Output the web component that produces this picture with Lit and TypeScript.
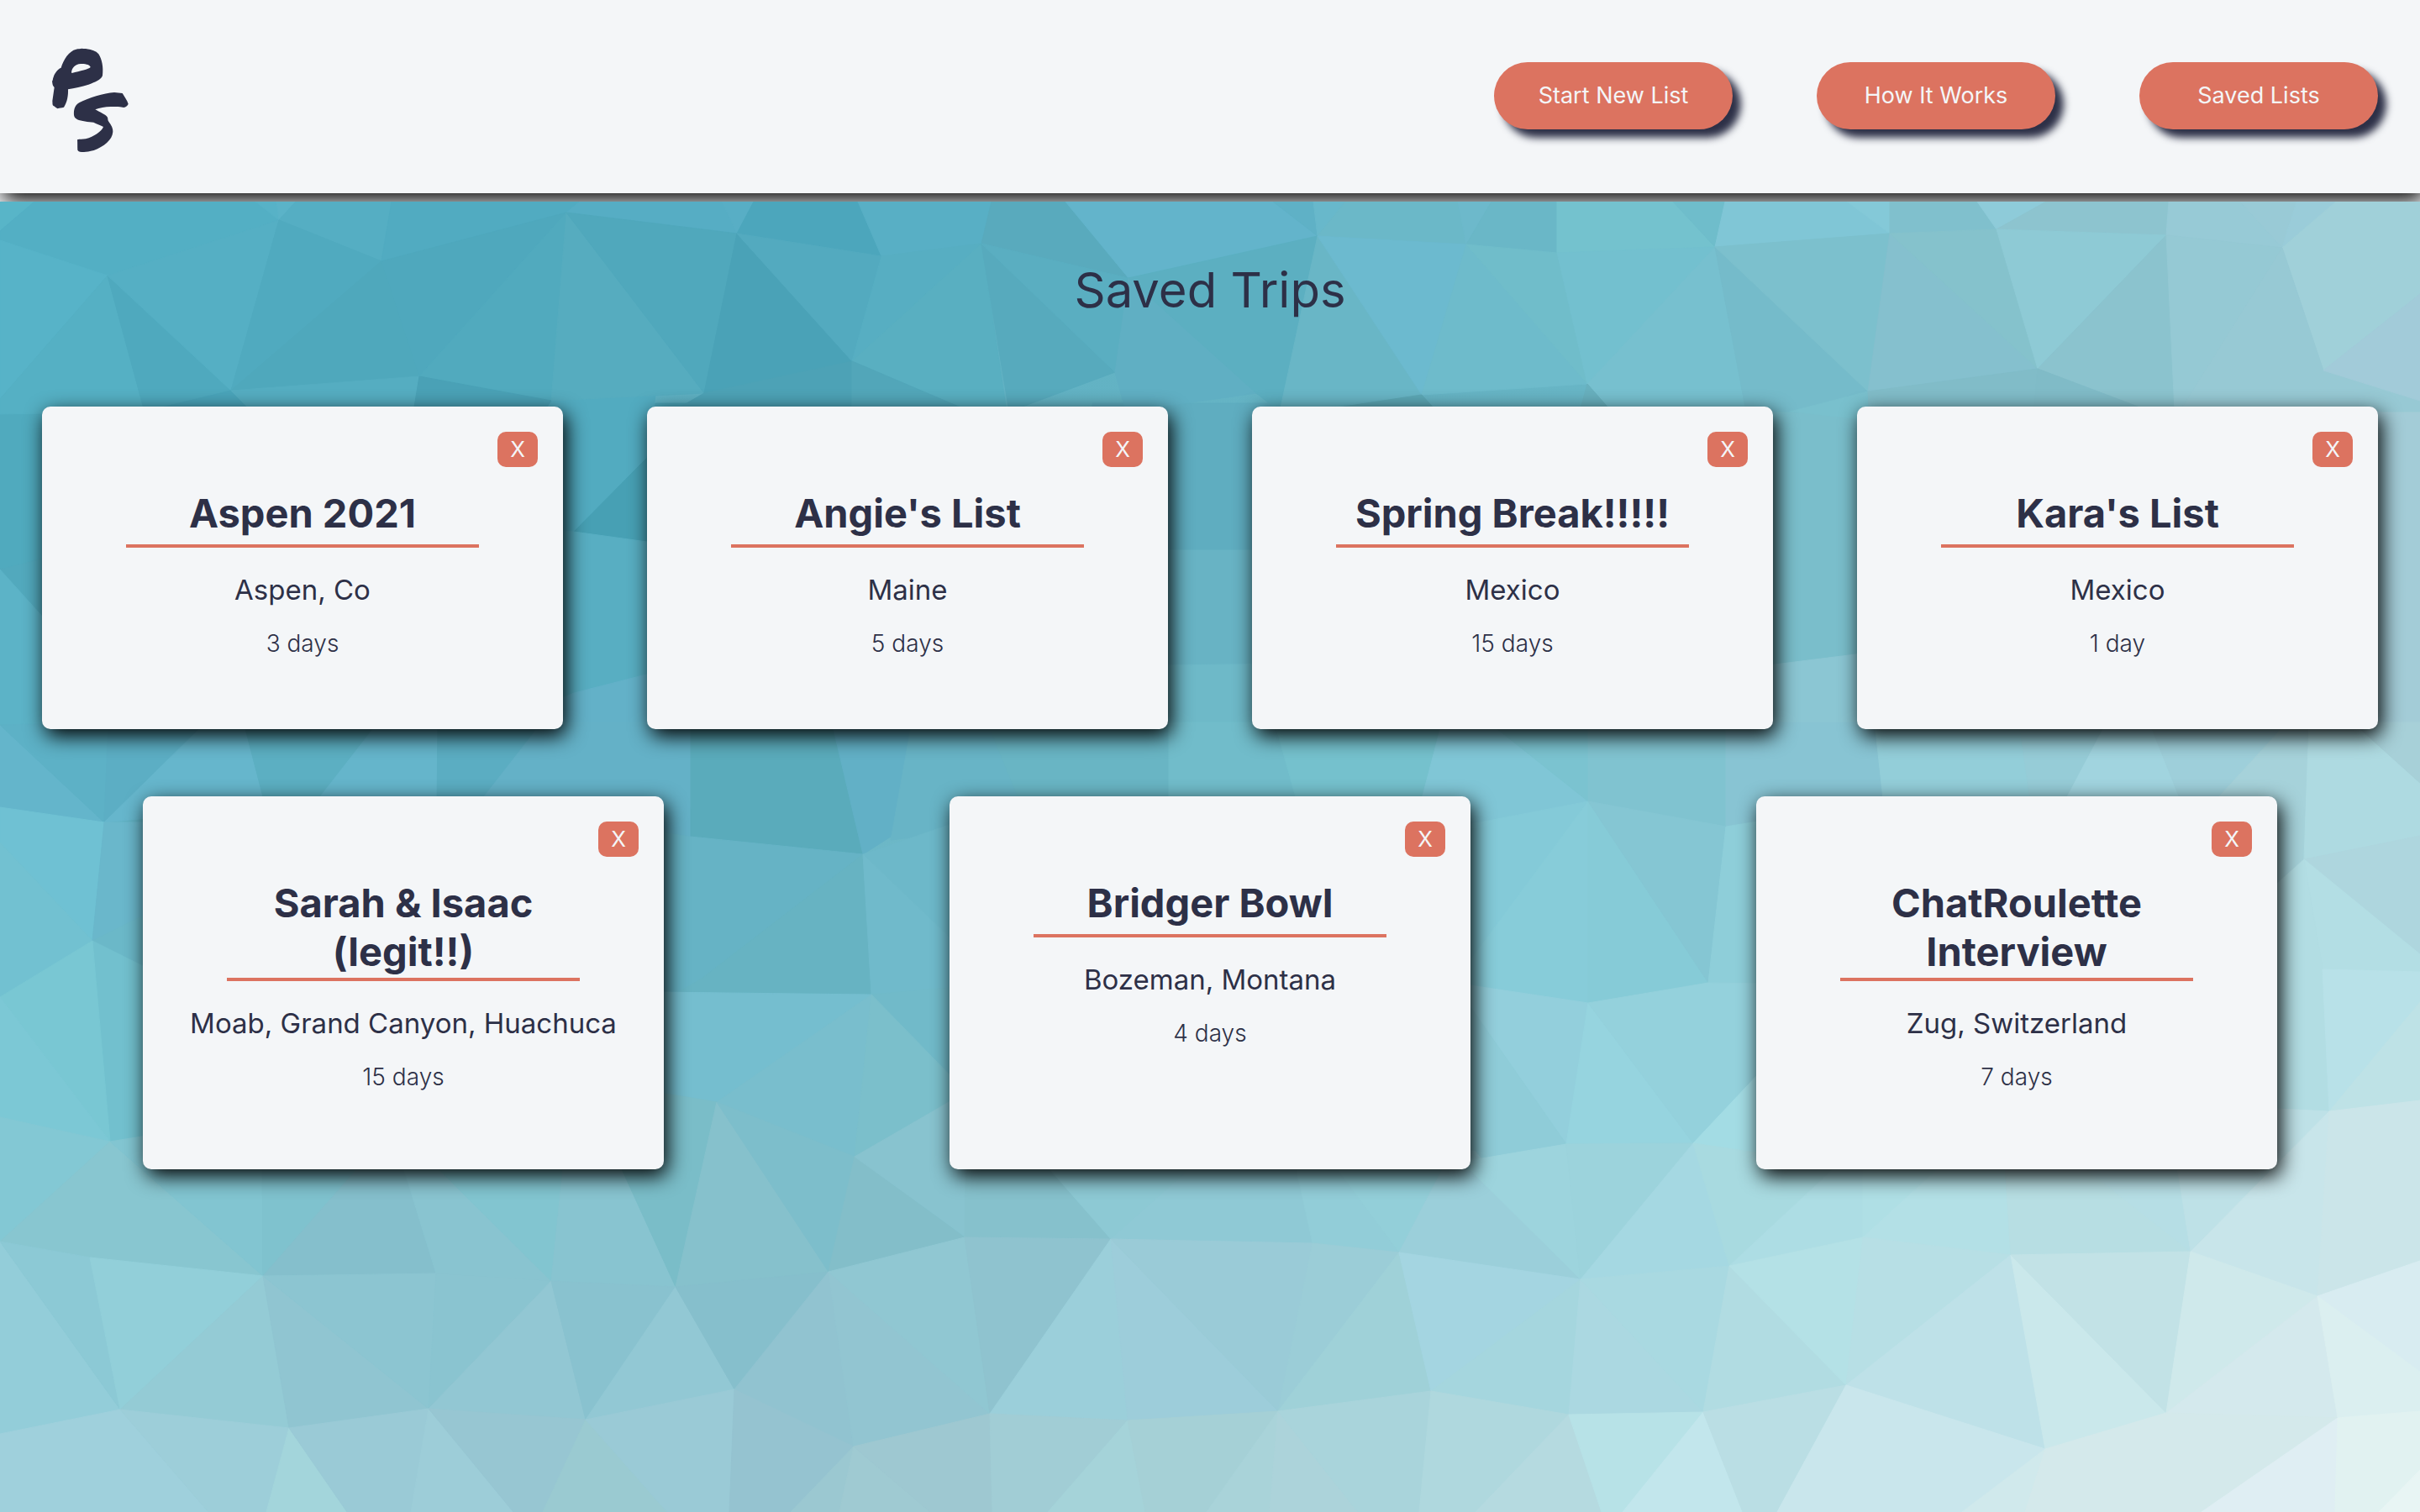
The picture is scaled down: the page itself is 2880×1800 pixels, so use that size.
import { LitElement, html, svg, css } from "lit";
import { customElement, property } from "lit/decorators.js";

interface Trip {
  name: string;
  place: string;
  days: number;
  roomy?: boolean;
}

const TRIPS: Trip[] = [
  { name: "Aspen 2021", place: "Aspen, Co", days: 3 },
  { name: "Angie's List", place: "Maine", days: 5 },
  { name: "Spring Break!!!!!", place: "Mexico", days: 15 },
  { name: "Kara's List", place: "Mexico", days: 1 },
  { name: "Sarah & Isaac (legit!!)", place: "Moab, Grand Canyon, Huachuca", days: 15, roomy: true },
  { name: "Bridger Bowl", place: "Bozeman, Montana", days: 4 },
  { name: "ChatRoulette Interview", place: "Zug, Switzerland", days: 7, roomy: true },
];

const NAV = ["Start New List", "How It Works", "Saved Lists"];

// Facets of the low-poly backdrop: fill colour, then the corner points.
const FACETS = `
50aabe 0,493 300,480 300,600 0,678
52a9bd 0,678 300,600 300,900 200,900
5cb3c7 0,678 200,900 0,900
52abc0 600,480 780,470 770,545 683,633 600,640
4ca4b8 780,480 900,480 900,660 770,645 770,545
47a0b4 770,545 683,633 770,645
58aec2 600,625 683,633 770,645 800,650 800,795 683,825 600,860
63b1c8 600,860 683,825 800,795 830,868 822,996 600,960
5fadc0 1300,480 1540,480 1540,655 1300,655
68b3c4 1300,655 1540,655 1540,790 1300,793
6eb9c8 1300,793 1540,790 1540,870 1300,870
7abecb 2080,480 2240,480 2240,778 2080,795
8bc6d3 2080,795 2240,775 2240,870 2080,870
a3ccd7 2800,470 2880,477 2880,868 2800,868
58b5c8 0,240 41,240 0,275
53afc4 41,240 304,240 332,262 128,328 0,286 0,275
57b2c7 304,240 329,240 332,262
5bb3c8 329,240 352,240 332,262
55aec3 352,240 466,240 454,311 332,262
51abc1 466,240 690,240 674,253 454,311
56adc4 690,240 859,240 877,278 674,253
58aec5 859,240 897,240 877,278
4ca6bc 897,240 1021,240 1049,305 877,278
58afc5 1021,240 1180,240 1168,290 1049,305
59aabd 1180,240 1268,240 1343,331 1168,290
63b4cb 1268,240 1515,240 1568,281 1343,331
5fb1c6 1515,240 1563,240 1568,281
68b8cb 1563,240 1601,240 1568,281
6bb8c8 1601,240 1735,240 1745,291 1568,281
6db9cb 1735,240 1775,240 1745,291
6ab7c7 1775,240 1853,240 1853,301 1745,291
74c2ce 1853,240 1991,240 2041,294 1853,301
6fbdcb 1991,240 2053,240 2041,294
80c6d6 2053,240 2198,240 2249,278 2041,294
84c9d8 2198,240 2249,240 2249,278
80c0cd 2249,240 2353,240 2376,273 2249,278
8ecbd9 2353,240 2435,240 2376,273
8dc4cf 2435,240 2581,240 2578,280 2376,273
97cad6 2581,240 2666,240 2716,295 2578,280
99cad6 2666,240 2733,240 2716,295
9accd9 2733,240 2780,240 2716,295
a0d0d9 2780,240 2880,240 2880,350 2765,441 2716,295
57b3c8 0,286 128,328 0,475
55b0c4 128,328 0,475 0,493 172,490
4fa9be 128,328 172,490 275,465
55afc4 128,328 332,262 275,465
50aabf 332,262 454,311 275,465
4fa8bc 454,311 275,465 499,448
4fa8bd 454,311 674,253 499,448
51aabe 674,253 499,448 656,477
56acbf 674,253 656,477 838,468
50a8bc 674,253 877,278 838,468
4aa2b7 877,278 838,468 1014,430
53aabf 877,278 1049,305 1014,430
57aec2 1049,305 1168,290 1014,430
59afc1 1168,290 1014,430 1201,510
57aabd 1168,290 1201,490 1327,443
5aaec1 1168,290 1343,331 1327,443
60afc3 1343,331 1327,443 1340,490 1495,468
5cafc1 1343,331 1568,281 1523,490 1495,468
69b6c6 1568,281 1523,490 1692,470
6cbacf 1568,281 1745,291 1692,470
6ebbcb 1745,291 1692,470 1889,457
70bdca 1745,291 1853,301 1889,457
73c0cf 1853,301 2041,294 1889,457
77c0cf 2041,294 1889,457 1918,490 2078,490
75bbca 2041,294 2078,490 2150,490 2223,466
7cc0cd 2041,294 2249,278 2223,466
85c0ce 2249,278 2223,466 2425,439
85c2cc 2249,278 2376,273 2425,439
8ecad5 2376,273 2578,280 2425,439
8bc3ce 2578,280 2425,439 2560,490 2588,490
95c9d4 2578,280 2716,295 2594,490 2588,490
97c9d4 2716,295 2765,441 2880,477 2880,490 2594,490
a2cbd9 2765,441 2880,350 2880,477
4aa4ba 172,490 275,465 300,490
55adc1 275,465 499,448 492,490 300,490
4aa1b6 499,448 656,477 640,500 492,490
4da2b6 838,468 1014,430 1014,490 800,490
52a6b9 1014,430 1014,490 1155,490
5da8b6 1560,490 1692,470 1710,490
68b0be 1889,457 1880,490 1918,490
79c0cd 2130,490 2223,466 2225,500
81bcc8 2223,466 2425,439 2420,500 2225,500
80bbc7 2425,439 2420,500 2560,490
64b5cb 0,863 124,979 0,961
5db1c6 0,863 129,860 124,979
5caec4 129,860 245,860 124,979
66b6cc 245,860 290,860 316,960 124,979
5cafc2 290,860 450,860 372,960 316,960
65b5cb 450,860 521,860 520,960 372,960
5badc2 521,860 645,860 567,960 520,960
64b1c7 645,860 822,860 822,996 567,960
6fc1d3 0,961 124,979 110,1120 0,1003
72c1d1 0,1003 110,1120 0,1187
6ab7cb 124,979 200,979 200,1075 110,1120
6bb8c8 110,1120 200,1075 200,1165
72c0ce 110,1120 200,1165 200,1350 131,1359
79c7d3 0,1187 110,1120 131,1359
7cc8d5 0,1187 131,1359 0,1330
5aabbb 822,860 990,860 1027,1017 822,996
62b0c6 990,860 1085,860 1085,980 1027,1017
68b4c6 1085,860 1175,860 1220,970 1125,992 1060,1000
69b5c4 1175,860 1391,860 1391,970 1220,970
71bcca 1391,860 1517,860 1545,960 1391,960
75c1cd 1517,860 1716,860 1687,970 1545,960
80c6d6 1716,860 1772,860 1890,954 1740,983 1687,970
7bc3d0 1772,860 1890,860 1890,954
80c3d0 1890,860 2054,860 2054,984 1890,954
88c4d3 2054,860 2231,860 2242,960 2100,976 2054,984
66b3c5 780,990 822,996 1027,1017 835,1165 808,1181 780,1180
67b3c2 1027,1017 835,1165 808,1181 1037,1184
6db8c9 1027,1017 1150,975 1150,1135
70bacb 1027,1017 1150,1135 1150,1174 1037,1184
75becf 780,1181 1037,1184 853,1312 780,1303
71bac9 1037,1184 1150,1174 1150,1300
79becd 1037,1184 853,1312 1017,1377
7bbfcb 1037,1184 1150,1300 1017,1377
84cad8 1730,985 1890,954 1730,1170
87ccd9 1890,954 1730,1170 1890,1194
86cbd7 1890,954 1890,1194 2033,1170
85c6d3 1890,954 2054,984 2033,1170
8eced9 2054,984 2110,975 2110,1171 2033,1170
93cfdc 1730,1170 1890,1194 1864,1362
8fccd8 1730,1170 1864,1362 1730,1385
96d4df 1890,1194 1864,1362 2015,1361
94d1dc 1890,1194 2033,1170 2110,1171 2110,1260 2015,1361
a3dce4 2015,1361 2110,1260 2110,1375
93ced9 2231,860 2403,860 2417,960 2242,960
96ccd7 2403,860 2507,860 2454,960 2417,960
a1d4df 2507,860 2558,860 2598,960 2454,960
9ecfda 2558,860 2722,860 2630,960 2598,960
a6d2da 2722,860 2748,860 2742,1023 2690,1075 2630,960
aedae1 2748,860 2800,860 2880,932 2880,995 2742,1023
a7d0d8 2800,860 2880,860 2880,932
aed6de 2742,1023 2880,995 2880,1136
b3dee4 2742,1023 2880,1136 2880,1157 2764,1154
b2dde3 2742,1023 2764,1154 2772,1323 2690,1319 2690,1070
b8e1e8 2764,1154 2880,1157 2880,1193 2772,1323
bee2e6 2772,1323 2880,1193 2880,1310
83c8d4 0,1330 131,1359 0,1478
88c6d0 131,1359 0,1478 107,1497 313,1519
82c5d1 131,1359 312,1330 313,1519
7fc2ce 312,1330 470,1340 313,1519
85bfcc 470,1340 474,1370 519,1516 313,1519
89c4d0 474,1370 500,1370 656,1525 519,1516
82c5d0 500,1370 672,1370 656,1525
88c4d0 672,1370 730,1370 804,1532 656,1525
7abdc8 730,1370 780,1300 853,1312 804,1532
86c1cc 853,1312 804,1532 986,1514
7dbecb 853,1312 1017,1377 986,1514
83bec9 1017,1377 986,1514 1148,1473
88c3cf 1017,1377 1150,1300 1150,1473
86c1cc 1150,1370 1230,1370 1322,1475 1148,1473
8dc9d4 1230,1370 1440,1370 1322,1475
8fc9d5 1440,1370 1538,1370 1562,1480 1322,1475
92cdd8 1538,1370 1575,1370 1665,1491 1562,1480
93cfd9 1575,1370 1728,1370 1665,1491
9bcfda 1728,1370 1755,1370 1881,1523 1665,1491
9dd4dd 1740,1383 1864,1362 1881,1523
9cd3dc 1864,1362 2015,1361 1881,1523
a5d8e2 2015,1361 1881,1523 2058,1507
a8dae0 2015,1361 2110,1375 2205,1370 2058,1507
addde4 2205,1370 2217,1370 2217,1473 2058,1507
afdfe5 2217,1370 2330,1370 2217,1473
b3e0e6 2330,1370 2385,1370 2393,1494 2217,1473
b7dee3 2385,1370 2455,1370 2607,1490 2393,1494
b6dee5 2455,1370 2588,1370 2607,1490
bee1e7 2588,1370 2690,1319 2772,1323 2607,1490
c8e5ea 2772,1323 2607,1490 2758,1543
cbe5e9 2772,1323 2880,1310 2880,1501 2758,1543
93cdd9 0,1478 0,1707 143,1678
8cc9d5 0,1478 107,1497 143,1678
92cfd9 107,1497 313,1519 143,1678
94cbd5 313,1519 143,1678 344,1700
90c5d1 313,1519 344,1700 510,1677
8cc5d1 313,1519 519,1516 510,1677
8ac4d0 519,1516 656,1525 510,1677
92c7d3 656,1525 510,1677 697,1690
89c2cf 656,1525 804,1532 697,1690
92c8d4 804,1532 697,1690 874,1654
86bfcc 804,1532 986,1514 874,1654
91c3d0 986,1514 874,1654 1016,1722
92c5d1 986,1514 1016,1722 1178,1683
90c7d2 986,1514 1148,1473 1178,1683
8fc3cf 1148,1473 1322,1475 1178,1683
9bcfda 1322,1475 1178,1683 1342,1691
9dcdda 1322,1475 1342,1691 1521,1680
9acbd7 1322,1475 1562,1480 1521,1680
9bcdd7 1562,1480 1665,1491 1521,1680
9fd1d8 1665,1491 1521,1680 1703,1656
a4d5e1 1665,1491 1881,1523 1703,1656
a5d6de 1881,1523 1703,1656 1867,1684
abd8e1 1881,1523 1867,1684 2027,1681
a9d9e1 1881,1523 2058,1507 2027,1681
b1dce2 2058,1507 2027,1681 2197,1649
b4e1e6 2058,1507 2217,1473 2197,1649
b7dfe5 2217,1473 2393,1494 2197,1649
bee1e8 2393,1494 2197,1649 2434,1725
cae8eb 2393,1494 2434,1725 2578,1682
c2e2e6 2393,1494 2607,1490 2578,1682
cfe9eb 2607,1490 2578,1682 2758,1543
d4e9ed 2758,1543 2578,1682 2782,1688
d8ecf1 2758,1543 2880,1501 2880,1633
dbeff0 2758,1543 2880,1633 2880,1680 2782,1688
9fd0dc 0,1707 143,1678 248,1800 0,1800
9dced9 143,1678 344,1700 317,1800 248,1800
a3d5db 344,1700 317,1800 413,1800
9acad6 344,1700 510,1677 489,1800 413,1800
9dcdd8 510,1677 489,1800 611,1800
97c6d2 510,1677 697,1690 646,1800 611,1800
9acad1 697,1690 646,1800 794,1800
9acad6 697,1690 874,1654 868,1800 794,1800
95c3d0 874,1654 1016,1722 941,1800 868,1800
9bc8d1 1016,1722 941,1800 999,1800
9fcad2 1016,1722 999,1800 1107,1800
9ec8d1 1016,1722 1178,1683 1181,1800 1107,1800
a1cdd5 1178,1683 1342,1691 1247,1800 1181,1800
a5d3d9 1342,1691 1247,1800 1363,1800
a5d0d6 1342,1691 1521,1680 1436,1800 1363,1800
a9d3d9 1521,1680 1436,1800 1511,1800
acd3da 1521,1680 1511,1800 1616,1800
a9d4db 1521,1680 1703,1656 1689,1800 1616,1800
afd8de 1703,1656 1867,1684 1756,1800 1689,1800
b5dae0 1867,1684 1756,1800 1906,1800
b7e2e7 1867,1684 2027,1681 1931,1800 1906,1800
c2e6ec 2027,1681 1931,1800 2074,1800
badee4 2027,1681 2197,1649 2115,1800 2074,1800
c9e6ec 2197,1649 2434,1725 2335,1800 2115,1800
d0e9ec 2434,1725 2335,1800 2410,1800
d4e9eb 2434,1725 2578,1682 2782,1688 2620,1800 2410,1800
dfeef3 2782,1688 2620,1800 2779,1800
e1f2f1 2782,1688 2880,1680 2880,1750 2831,1800 2779,1800
e8f5f4 2880,1750 2880,1800 2831,1800
`
  .trim()
  .split("\n")
  .map((line) => {
    const cut = line.indexOf(" ");
    return { fill: "#" + line.slice(0, cut), points: line.slice(cut + 1) };
  });

@customElement("poly-backdrop")
export class PolyBackdrop extends LitElement {
  static styles = css`
    :host {
      display: block;
    }
    .art {
      display: block;
      width: 100%;
      height: 100%;
    }
  `;

  render() {
    return html`
      <svg class="art" viewBox="0 240 2880 1560" preserveAspectRatio="none" aria-hidden="true">
        <defs>
          <linearGradient id="base" x1="0" y1="0" x2="1" y2="1">
            <stop offset="0" stop-color="#53abc0" />
            <stop offset="0.4" stop-color="#68b5c5" />
            <stop offset="0.7" stop-color="#93cdd8" />
            <stop offset="1" stop-color="#e0f0f1" />
          </linearGradient>
        </defs>
        <rect x="0" y="240" width="2880" height="1560" fill="url(#base)" />
        ${FACETS.map(
          (f) => svg`<polygon points=${f.points} fill=${f.fill} stroke=${f.fill} stroke-width="1" />`
        )}
      </svg>
    `;
  }
}

@customElement("trip-card")
export class TripCard extends LitElement {
  @property({ attribute: false }) trip!: Trip;

  static styles = css`
    :host {
      display: flex;
    }
    .card {
      flex: 1;
      box-sizing: border-box;
      display: flex;
      flex-direction: column;
      align-items: center;
      padding: 30px 30px 85px;
      border-radius: 10px;
      background: #f4f6f8;
      box-shadow: 4px 8px 24px #000;
      color: #2d3047;
      text-align: center;
    }
    .roomy {
      padding-bottom: 93px;
    }
    .remove {
      align-self: flex-end;
      width: 48px;
      height: 42px;
      padding: 0;
      border: 0;
      border-radius: 10px;
      background: #dc7360;
      color: #f4f6f8;
      font: 400 26px/42px Inter, "Liberation Sans", sans-serif;
      cursor: pointer;
    }
    .name {
      box-sizing: border-box;
      width: 75%;
      min-height: 70px;
      margin: 26px 0 0;
      padding-bottom: 2px;
      border-bottom: 4px solid #dc7360;
      font-size: 47px;
      line-height: 58px;
      font-weight: 700;
    }
    .place {
      margin: 28px 0 0;
      font-size: 33px;
      line-height: 44px;
    }
    .days {
      margin: 25px 0 0;
      font-size: 28px;
      line-height: 34px;
      font-weight: 300;
    }
  `;

  render() {
    const t = this.trip;
    return html`
      <article class="card ${t.roomy ? "roomy" : ""}">
        <button class="remove" type="button" aria-label="X, remove ${t.name}">X</button>
        <h2 class="name">${t.name}</h2>
        <p class="place">${t.place}</p>
        <p class="days">${t.days} ${t.days === 1 ? "day" : "days"}</p>
      </article>
    `;
  }
}

@customElement("app-root")
export class AppRoot extends LitElement {
  static styles = css`
    :host {
      display: flex;
      flex-direction: column;
      min-height: 100vh;
      background: #f4f6f8;
      color: #2d3047;
      font-family: Inter, "Liberation Sans", sans-serif;
    }
    .header {
      display: flex;
      align-items: center;
      justify-content: space-between;
      padding: 46px 50px 48px;
      margin-bottom: 10px;
      background: #f4f6f8;
      box-shadow: 4px 8px 24px #000;
    }
    .home {
      display: block;
    }
    .logo {
      display: block;
      width: 114px;
      height: 136px;
    }
    .nav {
      display: flex;
      gap: 100px;
    }
    .nav-button {
      width: 284px;
      height: 80px;
      padding: 0;
      border: 0;
      border-radius: 40px;
      background: #dc7360;
      box-shadow: 10px 10px 10px #2d3047;
      color: #f4f6f8;
      font: 400 27px/34px Inter, "Liberation Sans", sans-serif;
      cursor: pointer;
    }
    .main {
      position: relative;
      z-index: 0;
      flex: 1;
      padding-bottom: 80px;
    }
    .backdrop {
      position: absolute;
      inset: 0;
      z-index: -1;
    }
    .title {
      margin: 0;
      padding: 67px 50px 101px;
      font-size: 58px;
      line-height: 76px;
      font-weight: 400;
      text-align: center;
    }
    .trips {
      display: flex;
      flex-wrap: wrap;
      justify-content: space-around;
      row-gap: 80px;
    }
    .trip {
      width: 620px;
      margin: 0 50px;
    }
  `;

  render() {
    return html`
      <header class="header">
        <a class="home" href="#home" aria-label="Home">
          <svg class="logo" viewBox="30 18 342 408" fill="#2d3047" aria-hidden="true">
            <path
              fill-rule="evenodd"
              d="M98 122C107 92 126 62 152 56C160 53 166 55 172 53C180 54 186 53 190 55C208 57 222 62 232 73C244 92 250 120 246 150C240 166 218 174 196 182C172 190 146 194 123 199C124 220 120 246 108 263C100 265 92 265 86 268C80 265 76 261 72 259C66 256 68 248 67 241L74 192C66 184 68 178 66 171C70 164 68 160 71 155C75 142 84 128 98 122ZM135 139C137 122 148 109 168 108C186 107 203 112 203 120C196 128 166 133 137 141Z"
            />
            <path
              d="M144 291C142 268 150 253 164 246C196 230 250 212 288 210L317 213C325 226 334 239 338 251C336 258 329 262 322 264C310 261 300 262 275 261C255 261 236 265 220 271C238 282 256 288 264 299C266 305 264 309 268 314C278 328 284 338 283 351C281 380 250 404 215 417C200 420 188 423 180 423C168 423 160 422 157 416C156 404 157 392 156 379C165 376 175 378 186 376C216 368 242 350 249 333C240 327 226 324 214 317C196 316 170 313 156 307C148 302 145 298 144 291Z"
            />
          </svg>
        </a>
        <nav class="nav">
          ${NAV.map((label) => html`<button class="nav-button" type="button">${label}</button>`)}
        </nav>
      </header>
      <main class="main">
        <poly-backdrop class="backdrop"></poly-backdrop>
        <h1 class="title">Saved Trips</h1>
        <section class="trips">
          ${TRIPS.map((trip) => html`<trip-card class="trip" .trip=${trip}></trip-card>`)}
        </section>
      </main>
    `;
  }
}
